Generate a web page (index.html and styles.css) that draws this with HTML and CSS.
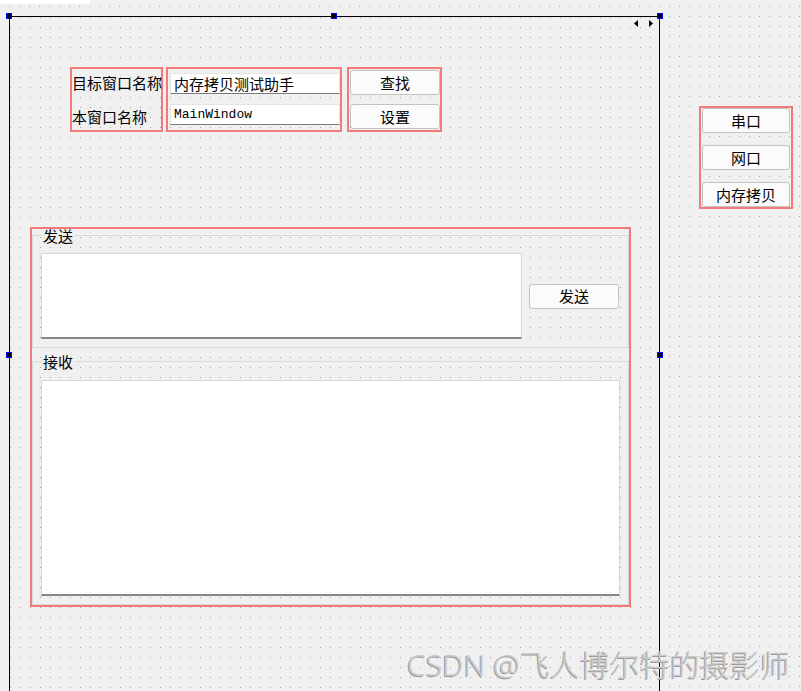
FILE: index.html
```html
<!DOCTYPE html>
<html lang="zh-CN">
<head>
<meta charset="utf-8">
<title>Qt Designer</title>
<link rel="stylesheet" href="styles.css">
</head>
<body>
<div class="tabstrip"></div>
<div class="canvas">
  <div class="form">
    <span class="handle h-tl"></span>
    <span class="handle h-tm"></span>
    <span class="handle h-tr"></span>
    <span class="handle h-ml"></span>
    <span class="handle h-mr"></span>
    <svg class="arrows" width="20" height="7" viewBox="0 0 20 7">
      <polygon points="4,0 4,7 0,3.5" fill="#000"/>
      <polygon points="15,0 15,7 19,3.5" fill="#000"/>
    </svg>
    <div class="top-row">
      <div class="box box-labels">
        <div class="label">目标窗口名称</div>
        <div class="label">本窗口名称</div>
      </div>
      <div class="box box-edits">
        <div class="line-edit">内存拷贝测试助手</div>
        <div class="line-edit mono">MainWindow</div>
      </div>
      <div class="box box-buttons">
        <button class="btn">查找</button>
        <button class="btn">设置</button>
      </div>
    </div>
    <div class="box box-groups">
      <fieldset class="group group-send">
        <legend>发送</legend>
        <div class="text-edit send-edit"></div>
        <button class="btn">发送</button>
      </fieldset>
      <fieldset class="group group-recv">
        <legend>接收</legend>
        <div class="text-edit recv-edit"></div>
      </fieldset>
    </div>
  </div>
  <div class="box box-side">
    <button class="btn side-btn">串口</button>
    <button class="btn side-btn">网口</button>
    <button class="btn side-btn">内存拷贝</button>
  </div>
</div>
<div class="watermark">CSDN @飞人博尔特的摄影师</div>
</body>
</html>
```
FILE: styles.css
```css
html, body {
  margin: 0;
  padding: 0;
}
body {
  width: 801px;
  height: 691px;
  overflow: hidden;
  position: relative;
  background: #f0f0f0;
  font-family: "Noto Sans CJK SC", "Noto Sans", sans-serif;
  font-size: 15px;
  color: #000;
}
.tabstrip {
  width: 90px;
  height: 4px;
  background: #fff;
}
.canvas {
  height: 687px;
  box-sizing: border-box;
  padding-top: 12px;
  display: flex;
  align-items: flex-start;
  background-color: #f0f0f0;
  background-image:
    linear-gradient(to bottom, transparent 1px, #f0f0f0 1px),
    linear-gradient(to right, #a2a2a2 1px, transparent 1px);
  background-size: 10px 10px;
  background-position: 9px 2px;
}
.form {
  position: relative;
  flex: none;
  margin-left: 9px;
  width: 651px;
  height: 679px;
  box-sizing: border-box;
  border: 1px solid #000;
  background-color: #f0f0f0;
  background-image:
    linear-gradient(to bottom, transparent 1px, #f0f0f0 1px),
    linear-gradient(to right, #a2a2a2 1px, transparent 1px);
  background-size: 10px 10px;
  background-position: 0 0;
}
.handle {
  position: absolute;
  width: 6px;
  height: 6px;
  box-sizing: border-box;
  border: 1px solid #0000ff;
  background: #000;
}
.h-tl { left: -4px; top: -4px; }
.h-tm { left: 321px; top: -4px; }
.h-tr { left: 647px; top: -4px; }
.h-ml { left: -4px; top: 335px; }
.h-mr { left: 647px; top: 335px; }
.arrows {
  position: absolute;
  left: 624px;
  top: 3px;
}
.box {
  box-sizing: border-box;
  border: 2px solid #f27a7a;
}
.top-row {
  display: flex;
  margin: 50px 0 0 60px;
}
.box-labels {
  width: 93px;
  height: 65px;
  padding-top: 1px;
  display: flex;
  flex-direction: column;
  gap: 8px;
}
.label {
  height: 26px;
  line-height: 26px;
  white-space: nowrap;
}
.box-edits {
  width: 176px;
  height: 65px;
  margin-left: 3px;
  padding: 4px 0 0 2px;
  display: flex;
  flex-direction: column;
  gap: 10px;
}
.line-edit {
  width: 170px;
  height: 21px;
  box-sizing: border-box;
  background: #fff;
  border: 1px solid #e4e4e4;
  border-bottom-color: #7a7a7a;
  padding-left: 3px;
  line-height: 19px;
  white-space: nowrap;
}
.mono {
  font-family: "Liberation Mono", monospace;
  font-size: 13px;
}
.box-buttons {
  width: 95px;
  height: 65px;
  margin-left: 5px;
  padding: 1px 0 0 1px;
  display: flex;
  flex-direction: column;
  gap: 9px;
}
.btn {
  flex: none;
  width: 90px;
  height: 25px;
  box-sizing: border-box;
  border: 1px solid #c3c3c3;
  border-radius: 3px;
  background: rgba(252, 252, 252, 0.88);
  font-family: inherit;
  font-size: 15px;
  line-height: 22px;
  padding: 0;
  color: #000;
}
.box-groups {
  width: 601px;
  height: 380px;
  margin: 95px 0 0 20px;
  display: flex;
  flex-direction: column;
  gap: 7px;
}
.group {
  margin: 0;
  min-width: 0;
  border: 1px solid #d9d9d9;
  padding: 0 8px 8px 8px;
}
.group legend {
  padding: 0 2px;
  margin: 0;
  font-size: 15px;
  line-height: 13px;
}
.group-send {
  padding-top: 11px;
  display: flex;
  align-items: center;
  gap: 7px;
}
.group-recv {
  padding-top: 12px;
}
.text-edit {
  box-sizing: border-box;
  background: #fff;
  border: 1px solid #d6d6d6;
  border-bottom: 2px solid #868686;
}
.send-edit {
  flex: none;
  width: 481px;
  height: 86px;
}
.recv-edit {
  width: 579px;
  height: 216px;
}
.box-side {
  flex: none;
  width: 94px;
  height: 103px;
  margin: 90px 0 0 39px;
  padding-left: 1px;
  display: flex;
  flex-direction: column;
  gap: 12px;
}
.side-btn {
  width: 88px;
}
.watermark {
  position: absolute;
  left: 407px;
  top: 650px;
  font-family: "Noto Sans", "Noto Sans CJK SC", sans-serif;
  font-weight: 300;
  font-size: 30px;
  line-height: 30px;
  white-space: nowrap;
  color: #c9c9c9;
  text-shadow: -1px 1px 0 #9c9c9c;
}
```
